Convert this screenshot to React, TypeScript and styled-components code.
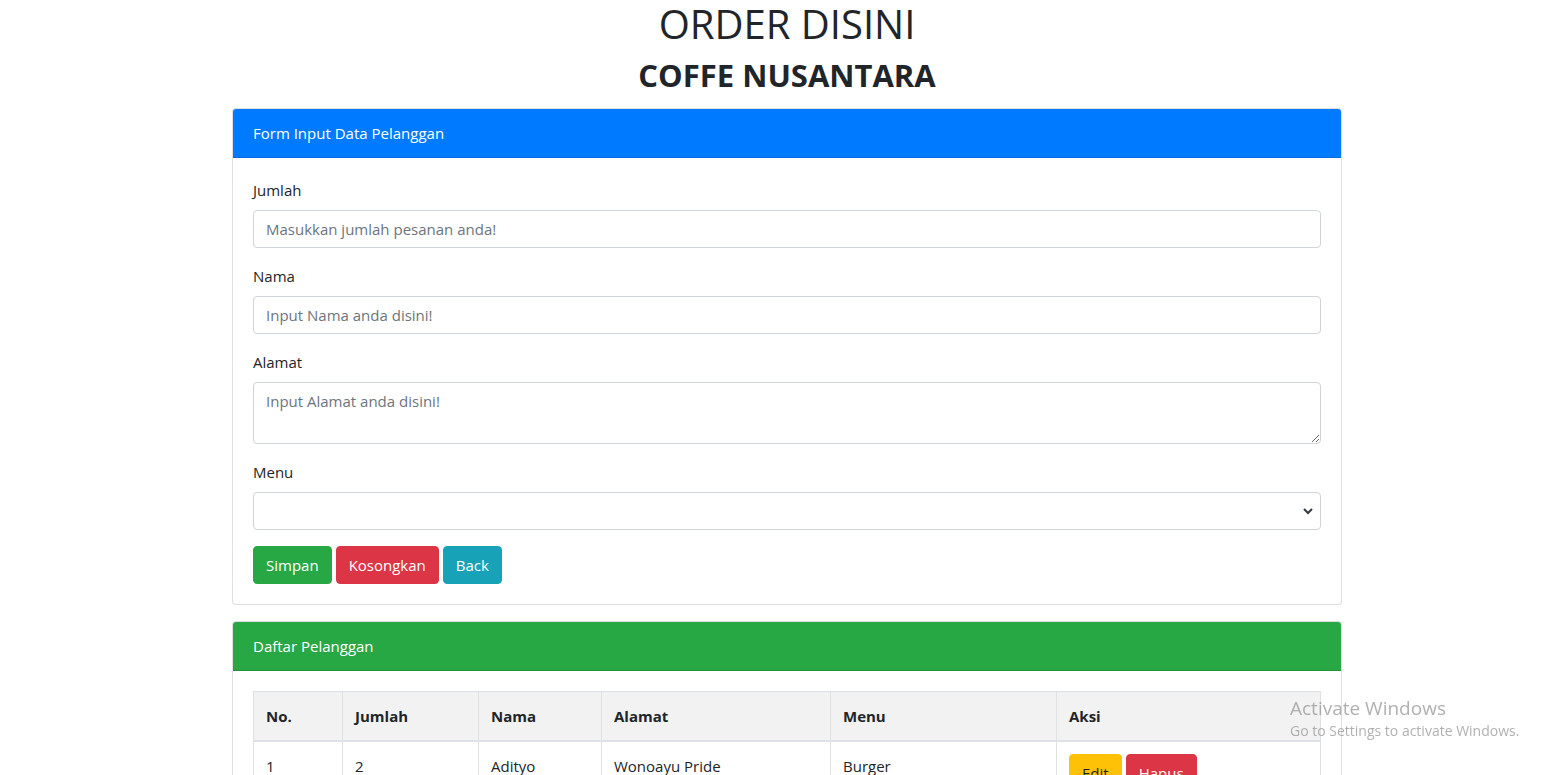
import React from "react";
import styled, { createGlobalStyle } from "styled-components";

const GlobalStyle = createGlobalStyle`
  * { box-sizing: border-box; }
  html, body { margin: 0; padding: 0; background: #fff; }
  body {
    padding-left: 17px;
    font-family: "Open Sans", "Noto Sans", "Liberation Sans", sans-serif;
    font-size: 15px;
    line-height: 1.6;
    color: #212529;
  }
`;

const Container = styled.div`
  width: 1110px;
  margin: 0 auto;
`;

const Title = styled.h1`
  margin: 0;
  text-align: center;
  font-size: 40px;
  font-weight: 500;
  line-height: 48px;
`;

const Subtitle = styled.h2`
  margin: 8px 0 14px;
  text-align: center;
  font-size: 31px;
  font-weight: 700;
  line-height: 38px;
`;

const Card = styled.section<{ $mt?: number }>`
  margin-top: ${(p) => p.$mt ?? 0}px;
  border: 1px solid rgba(0, 0, 0, 0.125);
  border-radius: 4px;
  background: #fff;
  overflow: hidden;
`;

const CardHeader = styled.div<{ $bg: string }>`
  background: ${(p) => p.$bg};
  color: #fff;
  padding: 12px 20px;
  line-height: 24px;
  border-bottom: 1px solid rgba(0, 0, 0, 0.125);
`;

const CardBody = styled.div`
  padding: 20px;
`;

const FormGroup = styled.div`
  margin-bottom: 16px;
`;

const Label = styled.label`
  display: block;
  margin-bottom: 8px;
  line-height: 24px;
`;

const fieldCss = `
  display: block;
  width: 100%;
  padding: 6px 12px;
  font-family: inherit;
  font-size: 15px;
  line-height: 24px;
  color: #495057;
  background: #fff;
  border: 1px solid #ced4da;
  border-radius: 4px;
  outline: none;
  &::placeholder { color: #6c757d; opacity: 1; }
`;

const Input = styled.input`
  ${fieldCss}
  height: 38px;
`;

const TextArea = styled.textarea`
  ${fieldCss}
  height: 62px;
  resize: vertical;
`;

const SelectWrap = styled.div`
  position: relative;
`;

const Select = styled.select`
  ${fieldCss}
  height: 38px;
  appearance: none;
`;

const Chevron = styled.svg`
  position: absolute;
  right: 8px;
  top: 15px;
  pointer-events: none;
`;

const ButtonRow = styled.div`
  display: flex;
  gap: 4px;
`;

const Button = styled.button<{ $bg: string; $fg?: string }>`
  font-family: inherit;
  font-size: 15px;
  line-height: 24px;
  padding: 6px 12px;
  border: 1px solid ${(p) => p.$bg};
  border-radius: 4px;
  background: ${(p) => p.$bg};
  color: ${(p) => p.$fg ?? "#fff"};
  cursor: pointer;
`;

const Table = styled.table`
  width: 100%;
  border-collapse: collapse;
`;

const Th = styled.th<{ $w: number }>`
  width: ${(p) => p.$w}px;
  text-align: left;
  font-weight: 700;
  padding: 12px;
  line-height: 24px;
  border: 1px solid #dee2e6;
  border-bottom-width: 2px;
  background: #f2f2f2;
`;

const Td = styled.td`
  padding: 12px;
  line-height: 24px;
  border: 1px solid #dee2e6;
  vertical-align: top;
`;

const ActionCell = styled.div`
  display: flex;
  gap: 4px;
`;

const Watermark = styled.div`
  position: fixed;
  left: 1290px;
  top: 696px;
  font-family: "Open Sans", "Noto Sans", sans-serif;
  color: rgba(150, 150, 150, 0.75);
  pointer-events: none;
`;

const WmTitle = styled.div`
  font-size: 19px;
  line-height: 24px;
`;

const WmSub = styled.div`
  font-size: 14px;
  line-height: 22px;
`;

const columns = [
  { label: "No.", w: 89 },
  { label: "Jumlah", w: 136 },
  { label: "Nama", w: 123 },
  { label: "Alamat", w: 229 },
  { label: "Menu", w: 226 },
  { label: "Aksi", w: 264 },
];

export default function App() {
  return (
    <>
      <GlobalStyle />
      <Container>
        <Title>ORDER DISINI</Title>
        <Subtitle>COFFE NUSANTARA</Subtitle>

        <Card>
          <CardHeader $bg="#007bff">Form Input Data Pelanggan</CardHeader>
          <CardBody>
            <FormGroup>
              <Label>Jumlah</Label>
              <Input placeholder="Masukkan jumlah pesanan anda!" />
            </FormGroup>
            <FormGroup>
              <Label>Nama</Label>
              <Input placeholder="Input Nama anda disini!" />
            </FormGroup>
            <FormGroup>
              <Label>Alamat</Label>
              <TextArea placeholder="Input Alamat anda disini!" />
            </FormGroup>
            <FormGroup>
              <Label>Menu</Label>
              <SelectWrap>
                <Select defaultValue="">
                  <option value=""></option>
                </Select>
                <Chevron width="10" height="8" viewBox="0 0 10 8">
                  <path d="M1 2 L5 6 L9 2" fill="none" stroke="#343a40" strokeWidth="2" />
                </Chevron>
              </SelectWrap>
            </FormGroup>
            <ButtonRow>
              <Button $bg="#28a745">Simpan</Button>
              <Button $bg="#dc3545">Kosongkan</Button>
              <Button $bg="#17a2b8">Back</Button>
            </ButtonRow>
          </CardBody>
        </Card>

        <Card $mt={16}>
          <CardHeader $bg="#28a745">Daftar Pelanggan</CardHeader>
          <CardBody>
            <Table>
              <thead>
                <tr>
                  {columns.map((c) => (
                    <Th key={c.label} $w={c.w}>
                      {c.label}
                    </Th>
                  ))}
                </tr>
              </thead>
              <tbody>
                <tr>
                  <Td>1</Td>
                  <Td>2</Td>
                  <Td>Adityo</Td>
                  <Td>Wonoayu Pride</Td>
                  <Td>Burger</Td>
                  <Td>
                    <ActionCell>
                      <Button $bg="#ffc107" $fg="#212529">Edit</Button>
                      <Button $bg="#dc3545">Hapus</Button>
                    </ActionCell>
                  </Td>
                </tr>
              </tbody>
            </Table>
          </CardBody>
        </Card>
      </Container>
      <Watermark>
        <WmTitle>Activate Windows</WmTitle>
        <WmSub>Go to Settings to activate Windows.</WmSub>
      </Watermark>
    </>
  );
}
